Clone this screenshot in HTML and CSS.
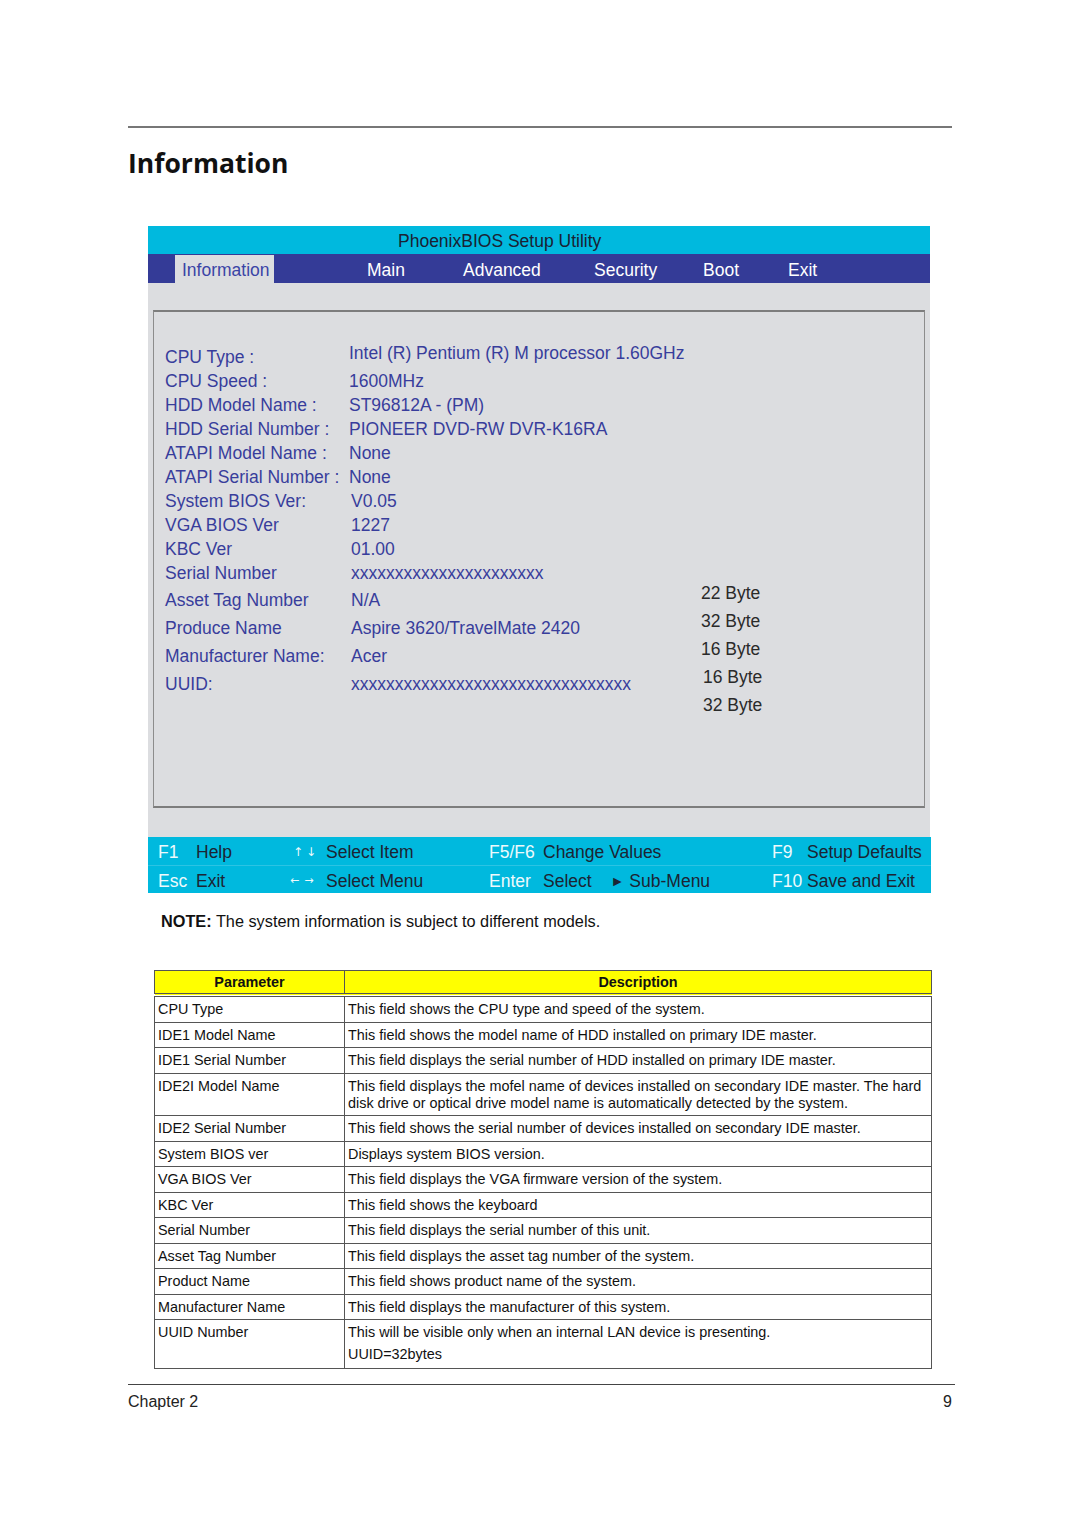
FILE: index.html
```html
<!DOCTYPE html>
<html lang="en">
<head>
    <meta charset="UTF-8">
    <title>Information</title>
    <link rel="stylesheet" href="styles.css">
</head>
<body>
    <div class="page">
        <h1 class="title">Information</h1>

        <div class="bios">
            <div class="bios-top">PhoenixBIOS Setup Utility</div>
            <div class="menu">
                <span class="tab">Information</span>
                <span>Main</span>
                <span>Advanced</span>
                <span>Security</span>
                <span>Boot</span>
                <span>Exit</span>
            </div>
            <div class="bios-body">
                <div class="panel">
                    <div class="info-list">
                        <div class="row"><span class="label">CPU Type :</span><span class="value up">Intel (R) Pentium (R) M processor 1.60GHz</span></div>
                        <div class="row"><span class="label">CPU Speed :</span><span class="value">1600MHz</span></div>
                        <div class="row"><span class="label">HDD Model Name :</span><span class="value">ST96812A - (PM)</span></div>
                        <div class="row"><span class="label">HDD Serial Number :</span><span class="value">PIONEER DVD-RW DVR-K16RA</span></div>
                        <div class="row"><span class="label">ATAPI Model Name :</span><span class="value">None</span></div>
                        <div class="row"><span class="label">ATAPI Serial Number :</span><span class="value">None</span></div>
                        <div class="row"><span class="label">System BIOS Ver:</span><span class="value shift">V0.05</span></div>
                        <div class="row"><span class="label">VGA BIOS Ver</span><span class="value shift">1227</span></div>
                        <div class="row"><span class="label">KBC Ver</span><span class="value shift">01.00</span></div>
                        <div class="row"><span class="label">Serial Number</span><span class="value shift">xxxxxxxxxxxxxxxxxxxxxx</span></div>
                        <div class="row tall"><span class="label">Asset Tag Number</span><span class="value shift">N/A</span></div>
                        <div class="row tall"><span class="label">Produce Name</span><span class="value shift">Aspire 3620/TravelMate 2420</span></div>
                        <div class="row tall"><span class="label">Manufacturer Name:</span><span class="value shift">Acer</span></div>
                        <div class="row tall"><span class="label">UUID:</span><span class="value shift">xxxxxxxxxxxxxxxxxxxxxxxxxxxxxxxx</span></div>
                    </div>
                    <div class="byte-list">
                        <div>22 Byte</div>
                        <div>32 Byte</div>
                        <div>16 Byte</div>
                        <div class="nudge">16 Byte</div>
                        <div class="nudge">32 Byte</div>
                    </div>
                </div>
            </div>
            <div class="help">
                <div class="help-row">
                    <span class="key">F1</span><span>Help</span>
                    <span class="key arrows">&uarr;&darr;</span><span>Select Item</span>
                    <span class="key">F5/F6</span><span>Change Values</span>
                    <span class="key">F9</span><span>Setup Defaults</span>
                </div>
                <div class="help-row">
                    <span class="key">Esc</span><span>Exit</span>
                    <span class="key arrows left">&larr;&rarr;</span><span>Select Menu</span>
                    <span class="key">Enter</span><span>Select <span class="sub">&#9658;</span>Sub-Menu</span>
                    <span class="key">F10</span><span>Save and Exit</span>
                </div>
            </div>
        </div>

        <p class="note"><b>NOTE:</b> The system information is subject to different models.</p>

        <table class="params">
            <thead>
                <tr><th class="col-param">Parameter</th><th>Description</th></tr>
            </thead>
            <tbody>
                <tr><td>CPU Type</td><td>This field shows the CPU type and speed of the system.</td></tr>
                <tr><td>IDE1 Model Name</td><td>This field shows the model name of HDD installed on primary IDE master.</td></tr>
                <tr><td>IDE1 Serial Number</td><td>This field displays the serial number of HDD installed on primary IDE master.</td></tr>
                <tr><td>IDE2I Model Name</td><td>This field displays the mofel name of devices installed on secondary IDE master. The hard disk drive or optical drive model name is automatically detected by the system.</td></tr>
                <tr><td>IDE2 Serial Number</td><td>This field shows the serial number of devices installed on secondary IDE master.</td></tr>
                <tr><td>System BIOS ver</td><td>Displays system BIOS version.</td></tr>
                <tr><td>VGA BIOS Ver</td><td>This field displays the VGA firmware version of the system.</td></tr>
                <tr><td>KBC Ver</td><td>This field shows the keyboard</td></tr>
                <tr><td>Serial Number</td><td>This field displays the serial number of this unit.</td></tr>
                <tr><td>Asset Tag Number</td><td>This field displays the asset tag number of the system.</td></tr>
                <tr><td>Product Name</td><td>This field shows product name of the system.</td></tr>
                <tr><td>Manufacturer Name</td><td>This field displays the manufacturer of this system.</td></tr>
                <tr class="uuid"><td>UUID Number</td><td>This will be visible only when an internal LAN device is presenting.<br>UUID=32bytes</td></tr>
            </tbody>
        </table>

        <div class="footer">
            <span>Chapter 2</span>
            <span>9</span>
        </div>
    </div>
</body>
</html>
```

FILE: styles.css
```css
body {
    margin: 0;
    background: white;
    color: #111;
    font-family: "Liberation Sans", Arial, sans-serif;
}

.page {
    width: 824px;
    margin: 0 auto;
    padding-top: 126px;
}

.title {
    margin: 0;
    padding-top: 18px;
    border-top: 2px solid #777;
    font-family: "Open Sans", sans-serif;
    font-size: 26.5px;
    line-height: 35px;
    font-weight: bold;
    color: #111;
}

/* bios screen */
.bios {
    width: 782px;
    margin: 45px 0 0 20px;
    font-size: 17.5px;
}

.bios-top {
    height: 28px;
    line-height: 31px;
    padding-left: 250px;
    background: #00b9de;
    color: #1b2233;
}

.menu {
    display: grid;
    grid-template-columns: 192px 96px 131px 109px 85px auto;
    height: 29px;
    padding-left: 27px;
    background: #343b97;
    color: white;
    line-height: 32px;
}

.tab {
    width: 92px;
    margin-top: 1px;
    padding-left: 7px;
    line-height: 31px;
    background: #dcdde0;
    color: #3a44a6;
}

.bios-body {
    height: 554px;
    padding: 27px 5px 0;
    box-sizing: border-box;
    background: #dcdde0;
}

.panel {
    display: flex;
    height: 498px;
    box-sizing: border-box;
    padding: 33px 0 0 11px;
    border: 1px solid #8c8c8c;
    border-top: 2px solid #7d7d7d;
    border-bottom: 2px solid #7d7d7d;
    color: #383d9c;
}

.info-list {
    width: 536px;
}

.row {
    display: flex;
    height: 24px;
    line-height: 24px;
    white-space: nowrap;
}

.row.tall {
    height: 28px;
    line-height: 30px;
}

.label {
    width: 184px;
    flex: none;
}

.value.up {
    position: relative;
    top: -4px;
}

.value.shift {
    padding-left: 2px;
}

.byte-list {
    padding-top: 234px;
    line-height: 28px;
    color: #2a2a2a;
}

.byte-list .nudge {
    padding-left: 2px;
}

/* help bar */
.help {
    width: 783px;
    background: #00b9de;
    color: #1c2433;
}

.help-row {
    display: grid;
    grid-template-columns: 38px 97px 33px 163px 54px 229px 35px auto;
    height: 28px;
    padding-left: 10px;
    line-height: 30px;
    white-space: nowrap;
}

.help-row + .help-row {
    border-top: 1px solid #2cc3e3;
    height: 27px;
}

.key {
    color: #eef9fc;
}

.arrows {
    font-family: "DejaVu Sans", sans-serif;
    font-size: 12px;
    letter-spacing: 3px;
}

.arrows.left {
    margin-left: -3px;
    font-size: 11px;
    letter-spacing: 5px;
}

.sub {
    margin-left: 14px;
    margin-right: 5px;
    font-size: 14px;
    vertical-align: 1px;
}

.note {
    margin: 19px 0 0 33px;
    font-size: 16.3px;
    line-height: 19px;
}

/* parameter table */
.params {
    width: 778px;
    margin: 39px 0 0 26px;
    border-collapse: collapse;
    font-size: 14.4px;
    line-height: 17px;
}

.params th,
.params td {
    border: 1px solid #555;
    padding: 4px 3px 3.5px;
    text-align: left;
    vertical-align: top;
}

.params th {
    height: 16px;
    padding: 3px 3px 2px;
    background: #ffff00;
    text-align: center;
    border-bottom: 4px double #555;
}

.params .col-param {
    width: 183px;
}

.params tr.uuid td {
    line-height: 22px;
    padding: 1px 3px 3px;
}

.footer {
    display: flex;
    justify-content: space-between;
    width: 827px;
    margin-top: 15px;
    padding-top: 6px;
    border-top: 1px solid #444;
    font-size: 16px;
    line-height: 21px;
    color: #222;
}

.footer span:last-child {
    padding-right: 3px;
}
```
